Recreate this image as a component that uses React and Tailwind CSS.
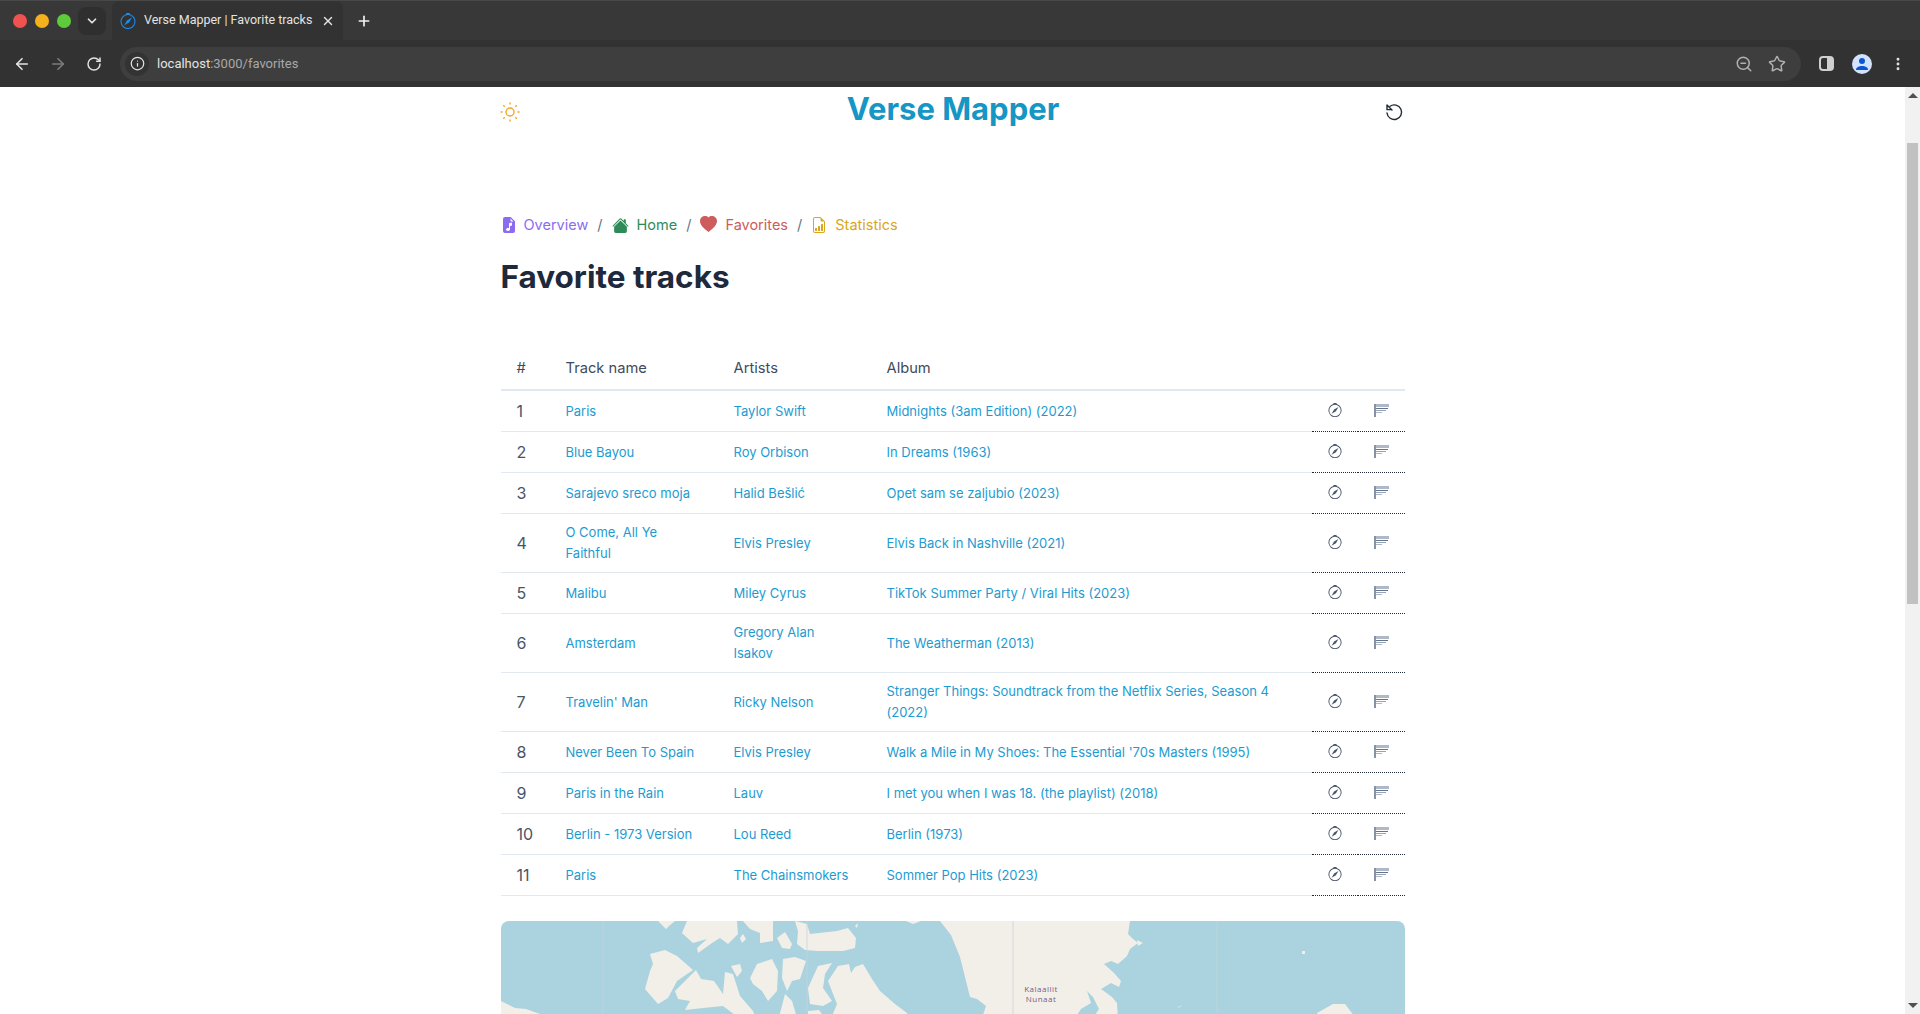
import { BsCompass, BsFileEarmarkMusicFill, BsFileEarmarkBarGraph, BsHeartFill, BsHouseFill } from 'react-icons/bs';
import { HiOutlineSun } from 'react-icons/hi';
import { ArrowLeft, ArrowRight, ChevronDown, Info, MoreVertical, Plus, RotateCw, Star, X, ZoomOut } from 'lucide-react';

const tracks = [
  { n: 1, name: 'Paris', artist: 'Taylor Swift', album: 'Midnights (3am Edition) (2022)' },
  { n: 2, name: 'Blue Bayou', artist: 'Roy Orbison', album: 'In Dreams (1963)' },
  { n: 3, name: 'Sarajevo sreco moja', artist: 'Halid Bešlić', album: 'Opet sam se zaljubio (2023)' },
  { n: 4, name: 'O Come, All Ye Faithful', artist: 'Elvis Presley', album: 'Elvis Back in Nashville (2021)' },
  { n: 5, name: 'Malibu', artist: 'Miley Cyrus', album: 'TikTok Summer Party / Viral Hits (2023)' },
  { n: 6, name: 'Amsterdam', artist: 'Gregory Alan Isakov', album: 'The Weatherman (2013)' },
  { n: 7, name: "Travelin' Man", artist: 'Ricky Nelson', album: 'Stranger Things: Soundtrack from the Netflix Series, Season 4 (2022)' },
  { n: 8, name: 'Never Been To Spain', artist: 'Elvis Presley', album: "Walk a Mile in My Shoes: The Essential '70s Masters (1995)" },
  { n: 9, name: 'Paris in the Rain', artist: 'Lauv', album: 'I met you when I was 18. (the playlist) (2018)' },
  { n: 10, name: 'Berlin - 1973 Version', artist: 'Lou Reed', album: 'Berlin (1973)' },
  { n: 11, name: 'Paris', artist: 'The Chainsmokers', album: 'Sommer Pop Hits (2023)' },
];

// land outlines of the map tile, in px of the 904x100 map box
const land = [
  '0,80 14,87 25,88 39,93 39,100 0,100',
  '149,33 164,29 176,35 192,49 176,60 167,77 157,83 144,68 149,50 152,43',
  '174,70 195,49 200,58 213,60 222,73 224,51 232,53 239,75 252,90 256,100 242,100 222,85 202,87 184,89 189,80 177,78',
  '230,45 239,43 241,50 236,56',
  '249,57 256,43 271,38 277,50 276,70 267,80 261,70 252,63',
  '282,38 294,36 305,40 299,58 291,60 286,70 281,57',
  '277,100 284,73 291,80 297,100',
  '307,67 317,45 331,42 324,53 322,67 331,80 322,85 309,83',
  '307,90 318,89 326,100 307,100',
  '327,60 337,45 348,43 350,52 354,46 362,43 371,58 379,70 394,83 406,92 407,100 329,100 336,83',
  '157,0 174,0 168,5 165,8 161,4',
  '181,12 186,0 236,0 237,13 227,23 219,17 211,22 197,32 196,27 206,18 192,22 182,13',
  '239,17 242,13 245,18 241,22',
  '242,0 272,0 272,20 259,22 259,12 249,8',
  '276,17 284,11 291,23 289,28 281,27',
  '294,0 306,3 309,13 336,10 347,7 355,17 354,27 342,30 317,30 304,29 296,23 297,10',
  '354,5 357,2 356,7',
  '405,0 420,0 412,3',
  '439,0 629,0 627,13 632,18 637,22 629,28 626,35 617,43 610,40 603,43 613,52 620,60 618,66 610,62 600,68 611,76 616,82 617,100 590,100 598,88 592,76 586,70 590,82 580,88 572,100 480,100 485,85 476,78 469,76 465,60 459,36 450,14',
  '636,19 642,22 637,25',
  '676,87 681,84 679,86',
  '801,30 804,30 804,33 801,33',
  '816,92 832,83 844,83 857,100 816,100',
];

const HistoryIcon = () => (
  <svg width="20" height="20" viewBox="0 0 20 20" fill="none" stroke="#1f2937" strokeWidth="1.4" strokeLinecap="round" className="mt-0.5">
    <path d="M6 4.300A7.300 7.300 0 1 1 3 11" />
    <path d="M3 3v4.600h4.600M3 3l5 5" />
  </svg>
);

const FlagLines = () => (
  <svg width="15" height="13" viewBox="0 0 15 13" className="inline-block align-middle -mt-[3px]">
    <rect x="0" y="0" width="2" height="13" fill="#8793a5" />
    <rect x="2" y="0" width="13" height="3" fill="#aeb8c6" />
    <rect x="2" y="4" width="12" height="1" fill="#64748b" />
    <rect x="2" y="6" width="10" height="1" fill="#94a3b8" />
    <rect x="2" y="8" width="6" height="1" fill="#aeb8c6" />
  </svg>
);

const MapTile = () => (
  <svg className="w-full h-[100px] block" viewBox="0 0 904 100">
    <rect width="904" height="100" fill="#aad3df" />
    <g fill="#f2efe9">
      {land.map((points) => (
        <polygon key={points} points={points} />
      ))}
    </g>
    <path d="M102 0v100M306 0v100M512 0v100M716 0v100" stroke="#c8d4d6" strokeWidth="0.8" fill="none" />
    <text x="540" y="71" fill="#7a5a84" fontSize="8" fontFamily="'Open Sans', sans-serif" textAnchor="middle" letterSpacing="0.5">Kalaallit</text>
    <text x="540" y="81" fill="#7a5a84" fontSize="8" fontFamily="'Open Sans', sans-serif" textAnchor="middle" letterSpacing="0.5">Nunaat</text>
  </svg>
);

const BrowserBar = () => (
  <div className="h-[87px] bg-[#383838] shrink-0 font-['Roboto',sans-serif]">
    <div className="h-10 flex items-center border-t border-[#484848]">
      <div className="flex items-center gap-2 pl-[13px]">
        <div className="w-3.5 h-3.5 rounded-full bg-[#f0524f]" />
        <div className="w-3.5 h-3.5 rounded-full bg-[#f5b01e]" />
        <div className="w-3.5 h-3.5 rounded-full bg-[#5ecc3a]" />
      </div>
      <div className="ml-[7px] w-7 h-7 rounded-lg bg-[#2f2f2f] flex items-center justify-center">
        <ChevronDown size={14} strokeWidth={3} className="text-[#e3e3e3]" />
      </div>
      <div className="ml-1.5 w-[231px] h-[39px] rounded-t-lg bg-[#323232] flex items-center pl-2 pr-2">
        <BsCompass size={16} className="text-[#1a8cf0]" />
        <span className="ml-2 text-[12.5px] text-[#e3e3e3] whitespace-nowrap">Verse Mapper | Favorite tracks</span>
        <X size={14} strokeWidth={2.5} className="ml-auto text-[#e3e3e3]" />
      </div>
      <Plus size={16} strokeWidth={2.5} className="ml-[13px] text-[#f1f1f1]" />
    </div>
    <div className="h-[47px] bg-[#323232] flex items-center pl-[13px] pr-3.5">
      <ArrowLeft size={18} strokeWidth={2.2} className="text-[#e3e3e3]" />
      <ArrowRight size={18} strokeWidth={2.2} className="ml-[18px] text-[#7c7c7c]" />
      <RotateCw size={16} strokeWidth={2.2} className="ml-[19px] text-[#e3e3e3]" />
      <div className="ml-[18px] flex-1 h-[34px] rounded-full bg-[#3e3e3e] flex items-center pl-[5px]">
        <div className="w-6 h-6 rounded-full bg-[#333333] flex items-center justify-center">
          <Info size={15} strokeWidth={2} className="text-[#e3e3e3]" />
        </div>
        <span className="ml-2 text-[13px] text-[#e3e3e3]">localhost<span className="text-[#a8a8a8]">:3000/favorites</span></span>
        <ZoomOut size={18} strokeWidth={2} className="ml-auto text-[#b0b0b0]" />
        <Star size={18} strokeWidth={2} className="ml-[15px] mr-[15px] text-[#b0b0b0]" />
      </div>
      <div className="ml-[18px] w-[15px] h-[15px] rounded-sm border-2 border-[#cfcfcf] bg-[linear-gradient(90deg,#323232_55%,#cfcfcf_55%)]" />
      <div className="ml-[18px] w-5 h-5 rounded-full bg-[#d3e3fd] flex items-center justify-center overflow-hidden">
        <svg width="14" height="14" viewBox="0 0 14 14" fill="#0b57d0"><circle cx="7" cy="4" r="3" /><path d="M1 13c0-3 3-4 6-4s6 1 6 4z" /></svg>
      </div>
      <MoreVertical size={16} strokeWidth={2.4} className="ml-[18px] text-[#e3e3e3]" />
    </div>
  </div>
);

const App = () => {
  return (
    <div className="h-screen overflow-hidden flex flex-col bg-white font-['Inter',sans-serif]">
      <BrowserBar />
      <div className="flex-1 flex min-h-0">
        <div className="flex-1 min-w-0 overflow-hidden">
          <div className="w-[904px] mx-auto">
            <div className="flex items-center justify-between h-[48px]">
              <HiOutlineSun size={24} strokeWidth={1.4} className="-ml-[3px] mt-0.5 text-[#f5a623]" />
              <div className="pb-1 text-[31px] leading-9 font-bold text-[#1596c4]">Verse Mapper</div>
              <HistoryIcon />
            </div>
            <div className="mt-[78px] flex items-center h-6 text-[14.5px] text-[#8b6cf0]">
              <BsFileEarmarkMusicFill size={16} className="text-[#8b6cf0]" />
              <span className="ml-[7px]">Overview</span>
              <span className="mx-[9px] text-[#64748b]">/</span>
              <BsHouseFill size={17} className="text-[#2e8b57]" />
              <span className="ml-2 text-[#2e8b57]">Home</span>
              <span className="mx-[9px] text-[#64748b]">/</span>
              <BsHeartFill size={17} className="-mt-0.5 text-[#cd5c5c]" />
              <span className="ml-2 text-[#cd5c5c]">Favorites</span>
              <span className="mx-[9px] text-[#64748b]">/</span>
              <BsFileEarmarkBarGraph size={16} className="text-[#daa520]" />
              <span className="ml-2 text-[#daa520]">Statistics</span>
            </div>
            <h1 className="mt-[22px] text-[31.5px] leading-9 font-bold text-[#1e293b]">Favorite tracks</h1>
            <table className="mt-[54px] w-full table-fixed border-collapse text-[13px]">
              <thead>
                <tr className="border-b-2 border-[#e2e8f0] text-left text-[14.7px] text-[#3f4b5c]">
                  <th className="w-[49px] px-4 pt-2 pb-2.5 font-normal">#</th>
                  <th className="w-[168px] px-4 pt-2 pb-2.5 font-normal">Track name</th>
                  <th className="w-[153px] px-4 pt-2 pb-2.5 font-normal">Artists</th>
                  <th className="px-4 pt-2 pb-2.5 font-normal">Album</th>
                  <th className="w-[46px]" />
                  <th className="w-[47px]" />
                </tr>
              </thead>
              <tbody>
                {tracks.map((t) => (
                  <tr key={t.n}>
                    <td className="border-b border-[#e2e8f0] px-4 py-2 text-base leading-6 text-[#475569]">{t.n}</td>
                    <td className="border-b border-[#e2e8f0] px-4 py-2 leading-[21px] text-[#1d9bd1]">{t.name}</td>
                    <td className="border-b border-[#e2e8f0] px-4 py-2 leading-[21px] text-[#1d9bd1]">{t.artist}</td>
                    <td className="border-b border-[#e2e8f0] px-4 py-2 leading-[21px] text-[#1d9bd1]">{t.album}</td>
                    <td className="border-b border-dotted border-[#1e293b] text-center"><BsCompass size={14} className="inline-block align-middle -mt-[3px] text-[#475569]" /></td>
                    <td className="border-b border-dotted border-[#1e293b] text-center"><FlagLines /></td>
                  </tr>
                ))}
              </tbody>
            </table>
            <div className="mt-[25px] rounded-lg overflow-hidden">
              <MapTile />
            </div>
          </div>
        </div>
        <div className="w-[15px] shrink-0 bg-[#f1f1f1] flex flex-col items-center">
          <div className="mt-1.5 w-0 h-0 border-x-[5px] border-x-transparent border-b-[5px] border-b-[#505050]" />
          <div className="mt-[45px] w-[11px] h-[461px] bg-[#c1c1c1]" />
          <div className="mt-auto mb-1.5 w-0 h-0 border-x-[5px] border-x-transparent border-t-[5px] border-t-[#505050]" />
        </div>
      </div>
    </div>
  );
};

export default App;
